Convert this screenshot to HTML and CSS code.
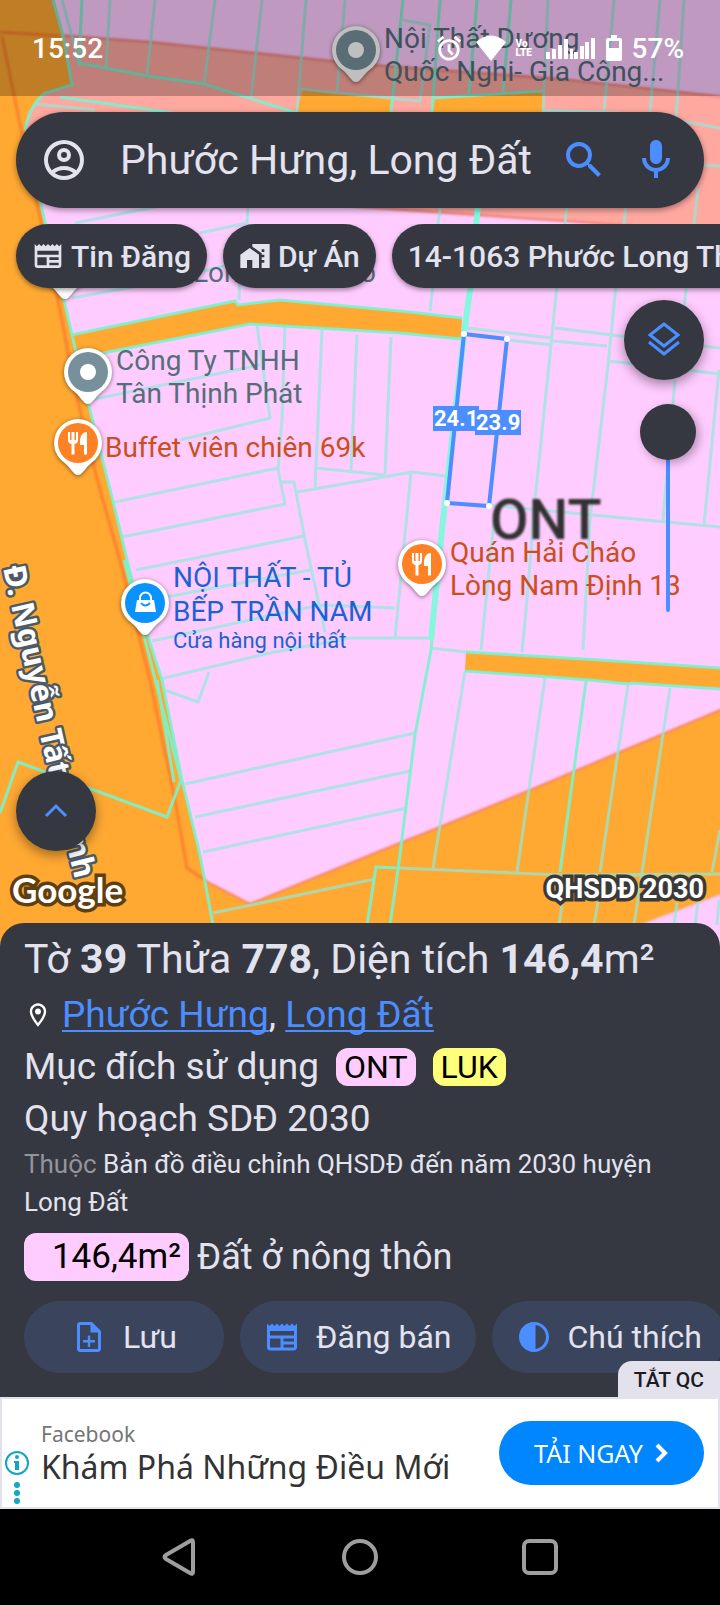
FILE: index.html
```
<!DOCTYPE html>
<html lang="vi">
<head>
    <meta charset="UTF-8">
    <meta name="viewport" content="width=device-width, initial-scale=1.0">
    <title>Bản đồ quy hoạch</title>
    <link rel="stylesheet" href="styles.css">
</head>
<body>
    <main class="map">
        <svg class="map-canvas" viewBox="0 0 720 947" preserveAspectRatio="xMidYMid slice">
            <defs>
                <filter id="soft"><feGaussianBlur stdDeviation="1"/></filter>
                <path id="pin" d="M0 32C-5 32-7 24-17 17A24 24 0 1 1 17 17C7 24 5 32 0 32Z"/>
                <path id="food" d="M-10-11v8a4 4 0 0 0 3.500 4v10.500h3V1a4 4 0 0 0 3.500-4v-8h-2v8h-1.500v-8h-3v8h-1.500v-8zM9-11C4-11 2-6 2-2v4h4v9.500h3z"/>
                <path id="street" d="M3 568C12 612 24 662 37 721S64 834 84 915"/>
            </defs>

            <!-- land use zones -->
            <rect width="720" height="947" fill="#ffccff"/>
            <g filter="url(#soft)" stroke="#f5776a" stroke-width="2">
                <path fill="#ffa8a0" d="M-5 30L55 35 150 42 360 64 560 79 725 97V233L580 222 360 207 130 180 20 150Z"/>
            </g>
            <g filter="url(#soft)">
                <path fill="#ffa933" stroke="#f8825a" stroke-width="2" d="M725 708L620 752 528 791 440 827 380 851 250 904 200 878 190 955H725Z"/>
                <path fill="#ffccff" d="M600 955L640 925 725 893V955Z"/>
            </g>
            <g fill="#ffa933">
                <path d="M-2-2H54L63 35 72 85 45 93 28 112 25 130 45 222 64 300 72 335 90 410 114 505 130 572 146 630 162 680 182 780 200 855 222 950H-2Z"/>
                <path d="M303 90L392 99 390 114H296zM434 98L543 92 542 114H432z"/>
                <path d="M71 335L235 301 238 305 280 300 400 311 462 318 461 339 400 333 250 324 108 352 76 360Z"/>
                <path d="M466 652L600 660 722 668V688L628 683 590 680 465 671Z"/>
            </g>
            <path class="edge" d="M0 32L60 36M2 36L18 115 38 208 60 310 75 390 100 490 120 560 150 680 175 800 187 868 205 880"/>

            <!-- parcel lines -->
            <path class="parcel" d="M62 0L80 66M110 0L106 68M155 0L147 75M215 0L204 84M262 0L251 98M306 0L297 112M345 0L337 92M403 20L430 25 420 101 300 89M548 0L543 112M614 0L604 112M660 0L650 112M684 0L676 120 720 128M704 165L720 166M698 188L694 224M35 104L95 110M543 110L620 113
                M75 223L160 206M248 205L247 223 200 233M440 208L438 224M567 205L565 224M626 205L624 224M200 272L240 262 239 300M72 298L150 284M433 285L430 311
                M557 285L551 345 535 500 527 600 522 652M616 285L608 365 590 520 583 650M686 288L684 310M467 328L552 338M508 340L552 345M555 328L720 348M553 341L607 346M609 361L720 374M719 370L704 525M675 380L663 520M488 505L720 527M494 520L481 650
                M257 326L270 418 180 440M90 400L260 365M285 326L282 420 278 470 285 504 122 537M322 330L315 487M357 335L351 470M391 337L385 474M316 468L385 475M297 492L412 472 446 476M281 482L294 482 305 540 325 632M115 502L278 468M136 570L304 536M150 600L310 570M152 641L320 605 395 608M160 679L270 653 350 638H430M209 672L198 702 165 690M411 472L395 638
                M185 784L415 733M195 817L410 771M203 852L407 808M431 648L466 652M545 678L517 872M628 685L600 872M670 688L642 872 634 925M720 830L712 872M465 671L433 868M213 913L375 879M398 868L560 875 720 874M562 904L559 925M598 902L594 925M677 902L674 925M698 902L695 925M719 900L717 925"/>
            <path class="parcel bold" d="M53 0L63 35 72 85 45 93Q30 105 25 130M82 0L79 63 148 76 204 84 300 114M60 97L180 114M440 0L432 112M403 0L391 112M477 0L469 94M511 0L503 92M434 98L543 91M40 200L45 222 64 300 72 335 90 410 114 505 130 572 146 630 162 680 182 780 200 855 213 925
                M71 335L235 301 238 305 280 300 400 311 462 318M76 360L108 352 250 324 400 333 461 339M466 652L600 660 720 668M465 671L590 680 628 684 632 683 720 689
                M432 640L431 650 415 735 398 870 390 925M586 681L560 872M367 925L376 867 398 868M0 813L18 762 167 817 181 780 145 640 124 560M157 680L174 782"/>
            <path class="parcel thick" d="M478 205L470 290 464 334 443 520 431 640"/>

            <!-- selected parcel -->
            <path class="selected" d="M464 334L507 339 489 506 447 503Z"/>
            <g fill="#fff">
                <circle cx="464" cy="334" r="3"/><circle cx="507" cy="339" r="3"/>
                <circle cx="489" cy="506" r="3"/><circle cx="447" cy="503" r="3"/>
            </g>
            <rect x="433" y="406" width="46" height="25" fill="#4c8dff"/>
            <text class="length" x="434" y="426">24.1</text>
            <rect x="475" y="410" width="46" height="25" fill="#4c8dff"/>
            <text class="length" x="476" y="430">23.9</text>
            <text class="zone" x="490" y="539">ONT</text>

            <text class="street"><textPath href="#street">Đ. Nguyễn Tất Thành</textPath></text>

            <!-- places -->
            <g class="place gray">
                <use href="#pin" x="356" y="50"/><circle cx="356" cy="50" r="20"/><circle class="dot" cx="356" cy="50" r="8"/>
                <text x="384" y="48">Nội Thất Dương</text>
                <text x="384" y="81">Quốc Nghi- Gia Công...</text>
                <use href="#pin" x="65" y="267"/>
                <text x="193" y="282">Lon</text>
                <text x="360" y="282">o</text>
                <use href="#pin" x="88" y="372"/><circle cx="88" cy="372" r="20"/><circle class="dot" cx="88" cy="372" r="8"/>
                <text x="116" y="370">Công Ty TNHH</text>
                <text x="116" y="403">Tân Thịnh Phát</text>
            </g>
            <g class="place orange">
                <use href="#pin" x="78" y="443"/><circle cx="78" cy="443" r="20"/><use class="glyph" href="#food" x="78" y="443"/>
                <text x="105" y="457">Buffet viên chiên 69k</text>
                <use href="#pin" x="422" y="564"/><circle cx="422" cy="564" r="20"/><use class="glyph" href="#food" x="422" y="564"/>
                <text x="450" y="562">Quán Hải Cháo</text>
                <text x="450" y="595">Lòng Nam Định 13</text>
            </g>
            <g class="place blue">
                <use href="#pin" x="145" y="603"/><circle cx="145" cy="603" r="20"/>
                <path class="glyph" d="M137 600h17l2 12h-21z"/>
                <path fill="none" stroke="#fff" stroke-width="2" d="M140 601v-3a5 5 0 0 1 11 0v3"/>
                <path fill="none" stroke="#0a93ff" stroke-width="2" d="M141 603q4 5 9 0"/>
                <text x="173" y="587">NỘI THẤT - TỦ</text>
                <text x="173" y="621">BẾP TRẦN NAM</text>
                <text class="sub" x="173" y="648">Cửa hàng nội thất</text>
            </g>
        </svg>

        <header class="status-bar">
            <span>15:52</span>
            <div class="status-icons">
                <svg width="26" height="26" viewBox="0 0 28 28" fill="none" stroke="#fff" stroke-width="3">
                    <circle cx="14" cy="16" r="10"/><path d="M14 10v7l4 4M2 7l6-5M26 7l-6-5"/>
                </svg>
                <svg class="wifi" width="30" height="26" viewBox="0 0 30 26" fill="#fff"><path d="M15 26L0 7Q15-6 30 7z"/></svg>
                <span class="volte">Vo<br>LTE</span>
                <svg class="signal" width="50" height="22" viewBox="0 0 50 22" fill="#fff"><path d="M0 15h4v7H0zM6 12h4v10H6zM12 8h4v14h-4zM18 2h4v20h-4zM24 12h3v10h-3zM28 15h4v7h-4zM34 9h4v13h-4zM39 5h4v17h-4zM45 1h4v21h-4z"/></svg>
                <svg width="16" height="26" viewBox="0 0 16 26" fill="#fff"><path fill-rule="evenodd" d="M5 0h6v3h3q2 0 2 2v19q0 2-2 2H2q-2 0-2-2V5q0-2 2-2h3zM3 6v7h10V6z"/></svg>
                <span>57%</span>
            </div>
        </header>

        <form class="search">
            <button type="button" aria-label="Tài khoản">
                <svg viewBox="0 0 24 24" fill="#e2e3ee"><path d="M12 2a10 10 0 1 0 0 20 10 10 0 0 0 0-20zM7.350 18.500C8.660 17.560 10.260 17 12 17s3.340.56 4.650 1.500C15.340 19.440 13.740 20 12 20s-3.340-.56-4.650-1.500zm10.790-1.380C16.450 15.800 14.320 15 12 15s-4.450.8-6.140 2.120A8 8 0 1 1 20 12c0 1.950-.7 3.730-1.860 5.120z"/><path d="M12 6a3.500 3.500 0 1 0 0 7 3.500 3.500 0 0 0 0-7zm0 5a1.500 1.500 0 1 1 0-3 1.500 1.500 0 0 1 0 3z"/></svg>
            </button>
            <input type="text" aria-label="Tìm kiếm" value="Phước Hưng, Long Đất">
            <button type="submit" aria-label="Tìm">
                <svg viewBox="0 0 24 24" fill="#4c8dff"><path d="M15.500 14h-.79l-.28-.27A6.470 6.470 0 0 0 16 9.500 6.500 6.500 0 1 0 9.500 16c1.610 0 3.090-.59 4.230-1.570l.27.28v.79l5 4.990L20.490 19l-4.990-5zm-6 0a4.500 4.500 0 1 1 0-9 4.500 4.500 0 0 1 0 9z"/></svg>
            </button>
            <button type="button" aria-label="Giọng nói">
                <svg viewBox="0 0 24 24" fill="#4c8dff"><path d="M12 14c1.660 0 3-1.340 3-3V5c0-1.660-1.340-3-3-3S9 3.340 9 5v6c0 1.660 1.340 3 3 3zM17 11c0 2.760-2.240 5-5 5s-5-2.240-5-5H5c0 3.530 2.610 6.430 6 6.920V21h2v-3.080c3.390-.49 6-3.390 6-6.920h-2z"/></svg>
            </button>
        </form>

        <nav class="chips">
            <button type="button">
                <svg viewBox="0 0 24 24"><path d="M22 3l-1.670 1.670L18.670 3 17 4.670 15.330 3l-1.660 1.670L12 3l-1.670 1.670L8.670 3 7 4.670 5.330 3 3.670 4.670 2 3v16c0 1.100.9 2 2 2h16c1.100 0 2-.9 2-2V3zM11 19H4v-6h7v6zm9 0h-7v-2h7v2zm0-4h-7v-2h7v2zm0-4H4V8h16v3z"/></svg>
                Tin Đăng
            </button>
            <button type="button">
                <svg viewBox="0 0 24 24"><path d="M1 11v10h5v-6h4v6h5V11L8 6z"/><path d="M10 3v1.970l7 5V11h2v2h-2v2h2v2h-2v4h6V3H10zm9 6h-2V7h2v2z"/></svg>
                Dự Án
            </button>
            <button type="button">14-1063 Phước Long Thọ</button>
        </nav>

        <div class="tools">
            <button class="fab" type="button" aria-label="Lớp bản đồ">
                <svg viewBox="0 0 40 40" width="40" height="40" fill="none" stroke="#4c8dff" stroke-width="3"><path d="M20 4l14 11-14 11L6 15zM5 22l15 12 15-12"/></svg>
            </button>
            <input class="opacity" type="range" aria-label="Độ mờ" min="0" max="100" value="100">
        </div>

        <button class="fab expand" type="button" aria-label="Mở rộng">
            <svg viewBox="0 0 24 24" width="24" height="24" fill="none" stroke="#4c8dff" stroke-width="3"><path d="M2 17l10-10 10 10"/></svg>
        </button>
        <div class="map-footer">
            <span class="google">Google</span>
            <span class="plan">QHSDĐ 2030</span>
        </div>
    </main>

    <section class="sheet">
        <h1>Tờ <b>39</b> Thửa <b>778</b>, Diện tích <b>146,4</b>m²</h1>
        <p class="row location">
            <svg viewBox="0 0 24 24" width="28" height="28" fill="#fff"><path d="M12 2C8.130 2 5 5.130 5 9c0 5.250 7 13 7 13s7-7.750 7-13c0-3.870-3.130-7-7-7zM7 9c0-2.760 2.240-5 5-5s5 2.240 5 5c0 2.880-2.880 7.190-5 9.880C9.920 16.210 7 11.850 7 9z"/><circle cx="12" cy="9" r="2.500"/></svg>
            <span><a href="#">Phước Hưng</a>, <a href="#">Long Đất</a></span>
        </p>
        <p class="row">Mục đích sử dụng <span class="tag ont">ONT</span><span class="tag luk">LUK</span></p>
        <p class="row">Quy hoạch SDĐ 2030</p>
        <p class="note"><span>Thuộc</span> Bản đồ điều chỉnh QHSDĐ đến năm 2030 huyện Long Đất</p>
        <p class="area"><span class="amount ont">146,4m²</span>Đất ở nông thôn</p>
        <div class="actions">
            <button type="button">
                <svg viewBox="0 0 24 24"><path d="M14 2H6c-1.100 0-2 .9-2 2v16c0 1.100.9 2 2 2h12c1.100 0 2-.9 2-2V8l-6-6zm4 18H6V4h7v5h5v11z"/><path d="M8 14h3.200v-3h1.600v3H16v1.700h-3.200v3h-1.600v-3H8z"/></svg>
                Lưu
            </button>
            <button type="button">
                <svg viewBox="0 0 24 24"><path d="M22 3l-1.670 1.670L18.670 3 17 4.670 15.330 3l-1.660 1.670L12 3l-1.670 1.670L8.670 3 7 4.670 5.330 3 3.670 4.670 2 3v16c0 1.100.9 2 2 2h16c1.100 0 2-.9 2-2V3zM11 19H4v-6h7v6zm9 0h-7v-2h7v2zm0-4h-7v-2h7v2zm0-4H4V8h16v3z"/></svg>
                Đăng bán
            </button>
            <button type="button">
                <svg viewBox="0 0 24 24"><path d="M12 22c5.520 0 10-4.480 10-10S17.520 2 12 2 2 6.480 2 12s4.480 10 10 10zm1-17.930c3.940.49 7 3.850 7 7.930s-3.050 7.440-7 7.930V4.070z"/></svg>
                Chú thích
            </button>
        </div>
    </section>

    <aside class="ad">
        <button class="ad-off" type="button">TẮT QC</button>
        <div class="ad-info">
            <svg viewBox="0 0 24 56" width="24" height="56" fill="#12a5c4">
                <circle cx="12" cy="12" r="11" fill="none" stroke="#12a5c4" stroke-width="2"/>
                <circle cx="12" cy="6" r="2"/><path d="M9 10h5v9h-4v-7H9z"/>
                <circle cx="12" cy="34" r="3"/><circle cx="12" cy="42" r="3"/><circle cx="12" cy="50" r="3"/>
            </svg>
        </div>
        <div class="ad-text">
            <small>Facebook</small>
            <strong>Khám Phá Những Điều Mới</strong>
        </div>
        <button class="ad-button" type="button">
            TẢI NGAY
            <svg viewBox="0 0 14 20" width="14" height="20" fill="none" stroke="#fff" stroke-width="4"><path d="M2 2l8 8-8 8"/></svg>
        </button>
    </aside>

    <footer class="nav-bar">
        <button type="button" aria-label="Quay lại">
            <svg viewBox="0 0 40 40"><path d="M33 5v30q0 3-3 1L6 22q-3-2 0-4L30 4q3-2 3 1z"/></svg>
        </button>
        <button type="button" aria-label="Màn hình chính">
            <svg viewBox="0 0 40 40"><circle cx="20" cy="20" r="16"/></svg>
        </button>
        <button type="button" aria-label="Gần đây">
            <svg viewBox="0 0 40 40"><rect x="4" y="4" width="32" height="32" rx="5"/></svg>
        </button>
    </footer>
</body>
</html>
```
FILE: styles.css
```
* {
    box-sizing: border-box;
}

body {
    margin: 0;
    min-height: 100vh;
    display: flex;
    flex-direction: column;
    font-family: Roboto, 'Noto Sans', sans-serif;
    background-color: #000;
    color: #e2e3ee;
}

h1, p {
    margin: 0;
    font-weight: 400;
}

button {
    padding: 0;
    border: none;
    background: none;
    color: inherit;
    font-family: inherit;
    cursor: pointer;
}

svg {
    display: block;
    flex-shrink: 0;
}

/* map */
.map {
    position: relative;
    flex: 1;
    min-height: 800px;
    margin-bottom: -24px;
    overflow: hidden;
}

.map-canvas {
    position: absolute;
    inset: 0;
    width: 100%;
    height: 100%;
}

.parcel {
    fill: none;
    stroke: #8eeadb;
    stroke-width: 3;
    stroke-opacity: 0.7;
}

.parcel.bold {
    stroke: #7af2cf;
    stroke-opacity: 0.9;
}

.parcel.thick {
    stroke: #86f7df;
    stroke-width: 6;
    stroke-opacity: 1;
}

.edge {
    fill: none;
    stroke: #fb6f2a;
    stroke-width: 3;
    filter: url(#soft);
    opacity: 0.7;
}

.selected {
    fill: none;
    stroke: #4c8dff;
    stroke-width: 4;
}

.length {
    font-size: 22px;
    font-weight: 700;
    fill: #fff;
}

.zone {
    font-size: 56px;
    font-weight: 500;
    fill: #333;
    filter: url(#soft);
}

.street {
    font-family: 'Noto Sans', sans-serif;
    font-size: 31px;
    font-weight: 700;
    fill: #fff;
    stroke: #4b5a66;
    stroke-width: 5;
    stroke-linejoin: round;
    paint-order: stroke;
}

.place {
    font-size: 28px;
}

.place use:not(.glyph) {
    fill: #fff;
    filter: drop-shadow(0 1px 2px rgba(0, 0, 0, 0.5));
}

.place .sub {
    font-size: 22px;
}

.place .glyph, .place .dot {
    fill: #fff;
}

.gray {
    fill: #546e7a;
}

.gray circle {
    fill: #78909c;
}

.orange {
    fill: #c8501a;
}

.orange circle {
    fill: #ff8126;
}

.blue {
    fill: #1a62d4;
}

.blue circle {
    fill: #0a93ff;
}

.status-bar {
    position: relative;
    display: flex;
    justify-content: space-between;
    align-items: center;
    height: 96px;
    padding: 0 36px 0 32px;
    background-color: rgba(0, 0, 0, 0.25);
    color: #fff;
    font-size: 28px;
    font-weight: 500;
}

.status-icons {
    display: flex;
    align-items: center;
    gap: 10px;
}

.wifi {
    margin-left: 4px;
}

.volte {
    width: 20px;
    font-size: 10px;
    line-height: 9px;
    font-weight: 900;
}

.search {
    position: relative;
    display: flex;
    align-items: center;
    gap: 24px;
    height: 96px;
    margin: 16px;
    padding: 0 24px;
    border-radius: 48px;
    background-color: #363841;
    box-shadow: 0 2px 6px rgba(0, 0, 0, 0.4);
}

.search input {
    flex: 1;
    min-width: 0;
    padding: 0 0 0 8px;
    border: none;
    outline: none;
    background: none;
    color: inherit;
    font-family: inherit;
    font-size: 41px;
}

.search svg {
    width: 48px;
    height: 48px;
}

.chips {
    position: relative;
    display: flex;
    gap: 16px;
    padding: 0 0 8px 16px;
    overflow: hidden;
}

.chips button {
    display: flex;
    flex-shrink: 0;
    align-items: center;
    gap: 7px;
    height: 64px;
    padding: 0 16px;
    border-radius: 32px;
    background-color: #363841;
    box-shadow: 0 2px 5px rgba(0, 0, 0, 0.4);
    font-size: 30px;
    font-weight: 500;
}

.chips svg {
    width: 32px;
    height: 32px;
    fill: #e2e3ee;
}

.tools {
    position: absolute;
    top: 300px;
    right: 16px;
    display: flex;
    flex-direction: column;
    align-items: center;
    gap: 24px;
}

.fab {
    display: flex;
    justify-content: center;
    align-items: center;
    width: 80px;
    height: 80px;
    border-radius: 50%;
    background-color: #363841;
    box-shadow: 0 4px 12px rgba(0, 0, 0, 0.4);
}

.opacity {
    appearance: none;
    writing-mode: vertical-lr;
    direction: rtl;
    width: 56px;
    height: 208px;
    margin: 0 0 0 8px;
    background: none;
}

.opacity::-webkit-slider-runnable-track {
    width: 4px;
    border-radius: 2px;
    background-color: #4c8dff;
}

.opacity::-webkit-slider-thumb {
    appearance: none;
    width: 56px;
    height: 56px;
    margin-left: -26px;
    border-radius: 50%;
    background-color: #363841;
    box-shadow: 3px 3px 10px rgba(0, 0, 0, 0.3);
}

.expand {
    position: absolute;
    left: 16px;
    bottom: 96px;
}

.map-footer {
    position: absolute;
    left: 12px;
    right: 16px;
    bottom: 36px;
    display: flex;
    justify-content: space-between;
    align-items: center;
    color: #fff;
    line-height: 44px;
    paint-order: stroke;
}

.google {
    font-family: Lato, sans-serif;
    font-size: 35px;
    font-weight: 700;
    -webkit-text-stroke: 7px #5e3f12;
}

.plan {
    font-size: 27px;
    font-weight: 700;
    -webkit-text-stroke: 7px #3a3a3a;
}

/* parcel details */
.sheet {
    position: relative;
    padding: 10px 24px 24px;
    border-radius: 24px 24px 0 0;
    background-color: #363841;
    overflow: hidden;
}

.sheet h1 {
    margin-bottom: 4px;
    font-size: 41px;
    line-height: 52px;
}

.sheet b {
    font-weight: 700;
}

.row {
    display: flex;
    align-items: center;
    font-size: 37px;
    line-height: 52px;
}

.location {
    gap: 10px;
}

.sheet a {
    color: #4c8dff;
    text-decoration-thickness: 2px;
    text-underline-offset: 3px;
    text-decoration-skip-ink: none;
}

.tag {
    margin-left: 17px;
    padding: 0 8px;
    border-radius: 12px;
    color: #000;
    font-size: 32px;
    line-height: 38px;
}

.ont {
    background-color: #ffccff;
}

.luk {
    background-color: #ffff7a;
}

.note {
    font-size: 26px;
    line-height: 38px;
}

.note span {
    color: #93949c;
}

.area {
    display: flex;
    align-items: center;
    gap: 8px;
    margin: 12px 0 20px;
    font-size: 36px;
    line-height: 48px;
}

.amount {
    min-width: 165px;
    padding-right: 8px;
    border-radius: 12px;
    color: #000;
    font-size: 35px;
    text-align: right;
}

.actions {
    display: flex;
    gap: 16px;
    margin-right: -24px;
    overflow: hidden;
}

.actions button {
    display: flex;
    flex-shrink: 0;
    justify-content: center;
    align-items: center;
    gap: 16px;
    min-width: 200px;
    height: 72px;
    padding: 0 24px;
    border-radius: 36px;
    background-color: #3a455d;
    font-size: 32px;
}

.actions svg {
    width: 36px;
    height: 36px;
    fill: #4c8dff;
}

/* ad banner */
.ad {
    position: relative;
    display: flex;
    align-items: center;
    height: 112px;
    padding-right: 14px;
    border: 2px solid #e3e1ec;
    background-color: #fff;
    color: #333;
    font-family: 'Noto Sans', sans-serif;
}

.ad-off {
    position: absolute;
    right: -2px;
    bottom: 108px;
    height: 38px;
    padding: 0 16px;
    border-radius: 14px 0 0 0;
    background-color: #e3e1ec;
    color: #1b1b23;
    font-family: Roboto, sans-serif;
    font-size: 21px;
    font-weight: 500;
}

.ad-info {
    align-self: flex-end;
    width: 39px;
    padding-left: 3px;
}

.ad-text {
    flex: 1;
    min-width: 0;
}

.ad-text small, .ad-text strong {
    display: block;
    font-weight: 400;
}

.ad-text small {
    color: #757575;
    font-size: 21px;
    line-height: 28px;
}

.ad-text strong {
    font-size: 32px;
    line-height: 38px;
}

.ad-button {
    display: flex;
    justify-content: center;
    align-items: center;
    gap: 12px;
    width: 205px;
    height: 64px;
    border-radius: 32px;
    background-color: #0086ff;
    color: #fff;
    font-size: 25px;
}

/* system navigation */
.nav-bar {
    display: flex;
    justify-content: center;
    align-items: center;
    gap: 140px;
    height: 96px;
}

.nav-bar svg {
    width: 40px;
    height: 40px;
    fill: none;
    stroke: #9e9e9e;
    stroke-width: 4;
}
```
